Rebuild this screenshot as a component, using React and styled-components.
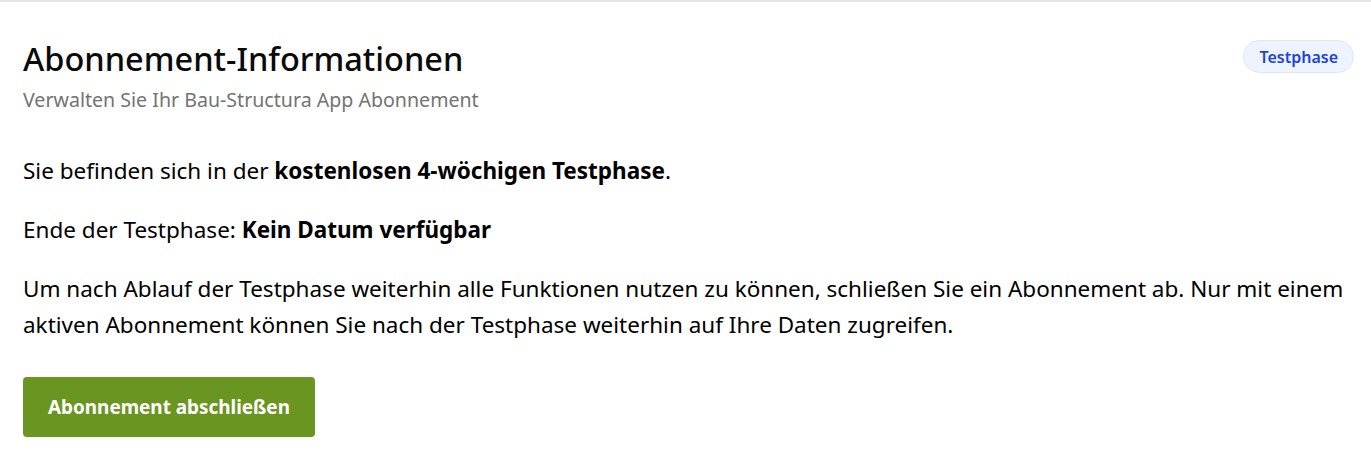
import React from "react";
import styled, { createGlobalStyle } from "styled-components";

const GlobalStyle = createGlobalStyle`
  html, body {
    margin: 0;
    padding: 0;
    background: #fff;
  }
  body {
    font-family: "Noto Sans", "Open Sans", "Liberation Sans", sans-serif;
    color: #000;
  }
`;

const Card = styled.section`
  border-top: 2px solid #e6e6e6;
  padding: 36px 17px 28px 23px;
`;

const Header = styled.div`
  display: flex;
  justify-content: space-between;
  align-items: flex-start;
`;

const Title = styled.h1`
  margin: 0;
  font-size: 32.5px;
  font-weight: 500;
  line-height: 42px;
  color: #0a0a0a;
`;

const Subtitle = styled.p`
  margin: 6px 0 0;
  font-size: 19.6px;
  line-height: 28px;
  color: #737373;
`;

const Badge = styled.span`
  margin-top: 2px;
  padding: 5px 15px 4px;
  border: 1px solid #e3e6ec;
  border-radius: 999px;
  background: #eef4ff;
  color: #1d43d8;
  font-size: 16px;
  font-weight: 600;
`;

const Body = styled.div`
  margin-top: 39px;
  display: flex;
  flex-direction: column;
  gap: 23px;
`;

const Text = styled.p`
  margin: 0;
  font-size: 22.5px;
  line-height: 36px;
  b {
    font-weight: 700;
  }
`;

const Button = styled.button`
  align-self: flex-start;
  margin-top: 11px;
  height: 60px;
  padding: 0 25px;
  border: none;
  border-radius: 4px;
  background: #6a9520;
  color: #fff;
  font-family: inherit;
  font-size: 18.9px;
  font-weight: 700;
  cursor: pointer;
`;

const App = () => {
  return (
    <>
      <GlobalStyle />
      <Card>
        <Header>
          <div>
            <Title>Abonnement-Informationen</Title>
            <Subtitle>Verwalten Sie Ihr Bau-Structura App Abonnement</Subtitle>
          </div>
          <Badge>Testphase</Badge>
        </Header>
        <Body>
          <Text>
            Sie befinden sich in der <b>kostenlosen 4-wöchigen Testphase</b>.
          </Text>
          <Text>
            Ende der Testphase: <b>Kein Datum verfügbar</b>
          </Text>
          <Text>
            Um nach Ablauf der Testphase weiterhin alle Funktionen nutzen zu
            können, schließen Sie ein Abonnement ab. Nur mit einem aktiven
            Abonnement können Sie nach der Testphase weiterhin auf Ihre Daten
            zugreifen.
          </Text>
          <Button>Abonnement abschließen</Button>
        </Body>
      </Card>
    </>
  );
};

export default App;
